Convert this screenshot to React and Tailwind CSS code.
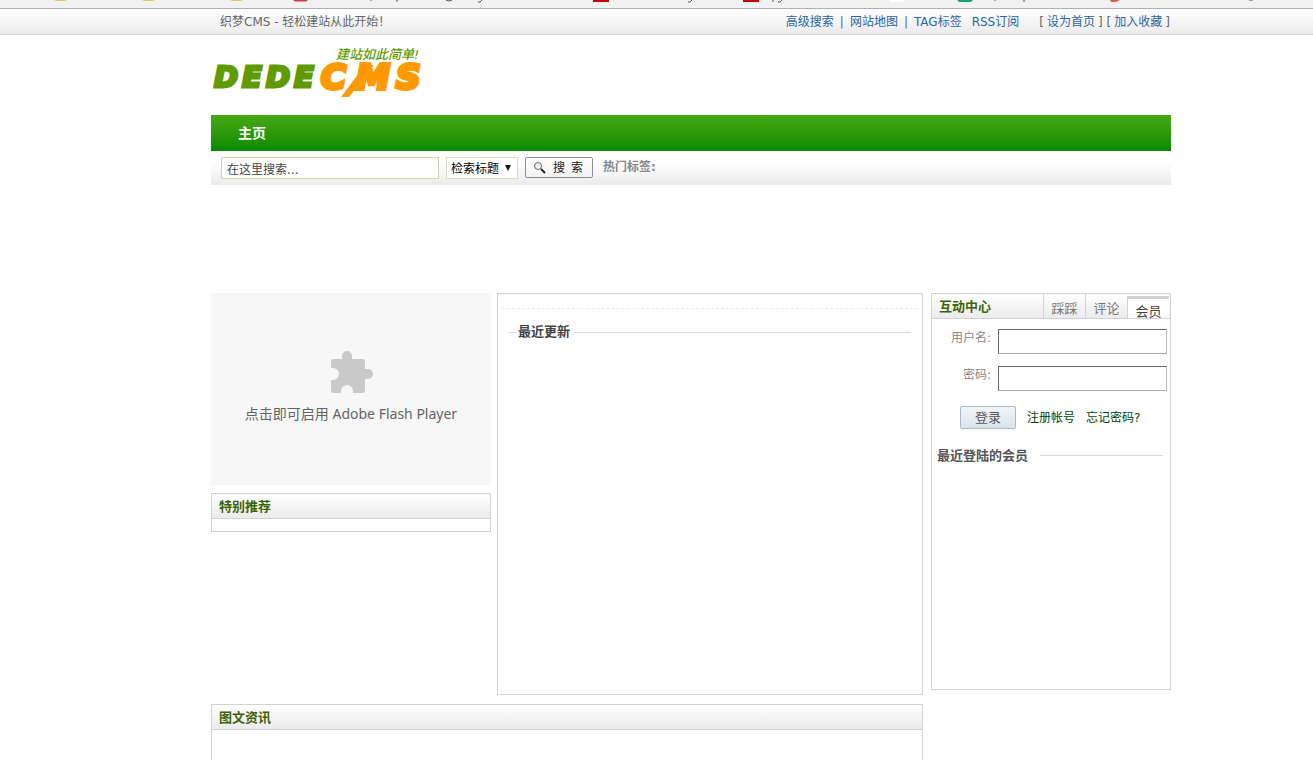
import React, { useState } from 'react';

const fontStack = "font-['DejaVu_Sans','Noto_Sans_CJK_SC',sans-serif]";

const BookmarkStrip = () => (
  <div className="h-[9px] overflow-hidden border-b border-[#b0b0b0] bg-[#f1f1f1]">
    <svg width="1313" height="8" aria-hidden="true">
      <g fill="#d9cf55">
        <path d="M54 0h13l-2 1h-9z" />
        <path d="M142 0h13l-2 1h-9z" />
        <path d="M230 0h13l-2 1h-9z" />
      </g>
      <path d="M293 0h15l-2 1.5h-11z" fill="#d03a48" />
      <g fill="none" stroke="#555" strokeWidth="1">
        <path d="M371 0v1M398 0l-2 1.500M446 0q3 2 6 0M482 0l-2 2h-2" />
        <path d="M692 0l-2 2h-2M773 0v2M782 0l-2 2h-2M995 0v1M1024 0v2M1249 0h4" />
      </g>
      <path d="M593 0h16v2h-16zM743 0h16v2h-16z" fill="#c4000b" />
      <path d="M889 0h16l-2 2h-12z" fill="#fff" />
      <path d="M957 0h16l-2 2h-12z" fill="#12a26a" />
      <path d="M1110 0h10l-4 2h-5z" fill="#d9604c" />
    </svg>
  </div>
);

const TopBar = () => (
  <div className="h-[26px] border-b border-[#d2d2d2] bg-linear-to-b from-white to-[#ebebeb]">
    <div className="ml-[211px] flex h-full max-w-[960px] items-center justify-between pr-px pl-[9px] text-[#666]">
      <span>织梦CMS - 轻松建站从此开始！</span>
      <div className="flex items-center">
        <a href="#search" className="text-[#2b65a5]">高级搜索</a>
        <span className="px-[6px]">|</span>
        <a href="#map" className="text-[#2b65a5]">网站地图</a>
        <span className="px-[6px]">|</span>
        <a href="#tags" className="text-[#2b65a5]">TAG标签</a>
        <a href="#rss" className="ml-[10px] text-[#2b65a5]">RSS订阅</a>
        <span className="ml-5">[</span>
        <a href="#home" className="mx-[3px] text-[#2b65a5]">设为首页</a>
        <span>]</span>
        <span className="ml-1">[</span>
        <a href="#fav" className="mx-[3px] text-[#2b65a5]">加入收藏</a>
        <span>]</span>
      </div>
    </div>
  </div>
);

const Logo = () => (
  <a href="#home" aria-label="DEDECMS">
    <svg width="220" height="64" viewBox="0 0 220 64">
      <text x="125" y="20" fontSize="13" fontStyle="italic" fontWeight="500" fill="#5f9a00">
        建站如此简单!
      </text>
      <g fontWeight="700" fontStyle="italic">
        <text y="48" fontSize="29" fill="#5f9a00" stroke="#5f9a00" strokeWidth="3">
          <tspan x="3">D</tspan>
          <tspan x="31">E</tspan>
          <tspan x="55">D</tspan>
          <tspan x="83">E</tspan>
        </text>
        <text y="50" fontSize="34" fill="#ff9900" stroke="#ff9900" strokeWidth="4">
          <tspan x="110">C</tspan>
          <tspan x="145">M</tspan>
          <tspan x="185">S</tspan>
        </text>
      </g>
      <path d="M130 58l24-32h9l-25 32z" fill="#ff9900" />
    </svg>
  </a>
);

const SearchBar = () => {
  const [keyword, setKeyword] = useState('在这里搜索...');

  return (
    <form
      className="flex h-[34px] items-start bg-linear-to-b from-white from-30% to-[#ebebeb] pt-[6px] pl-[10px]"
      onSubmit={(e) => e.preventDefault()}
    >
      <input
        aria-label="关键词"
        className="h-[22px] w-[218px] border border-[#c5d9a8] bg-white px-[5px] pt-px text-[#444] outline-none"
        value={keyword}
        onChange={(e) => setKeyword(e.target.value)}
      />
      <div className="relative ml-[7px]">
        <select
          aria-label="检索方式"
          className="h-[22px] w-[72px] appearance-none border border-[#cfdfb8] bg-white pt-px pl-1 text-black outline-none"
        >
          <option>检索标题</option>
          <option>智能模糊</option>
        </select>
        <svg className="pointer-events-none absolute top-2 right-[7px]" width="6" height="6" aria-hidden="true">
          <path d="M0 0h6L3 6z" fill="#111" />
        </svg>
      </div>
      <button
        type="submit"
        className="ml-[7px] flex h-[21px] w-[68px] items-center rounded-[2px] border border-[#8e8e8e] bg-linear-to-b from-white to-[#f2f2f2] pl-[7px] text-[#222]"
      >
        <svg width="14" height="14" viewBox="0 0 14 14" className="mr-[6px]" aria-hidden="true">
          <circle cx="5" cy="5" r="3.500" fill="#f4f4f4" stroke="#666" />
          <path d="M8 8l4 4" stroke="#222" strokeWidth="2" />
        </svg>
        <span>搜</span>
        <span className="ml-[6px]">索</span>
      </button>
      <span className="ml-[10px] pt-px font-bold text-[#888]">热门标签:</span>
    </form>
  );
};

const FlashBox = () => (
  <button
    type="button"
    className="flex h-[192px] w-full flex-col items-center bg-[#f7f7f7] pt-[56px] font-['Noto_Sans','Noto_Sans_CJK_SC',sans-serif] text-[14px] text-[#646464]"
  >
    <svg width="44" height="44" viewBox="0 0 44 44" className="mb-3" aria-hidden="true">
      <path
        d="M5 10H13V7A5 5 0 0 1 23 7V10H33Q36 10 36 13V20H39A5 5 0 0 1 39 30H36V41Q36 44 33 44H24V42A6 6 0 0 0 12 42V44H5Q2 44 2 41V31H4A6 6 0 0 0 4 19H2V13Q2 10 5 10Z"
        fill="#c9c9c9"
      />
    </svg>
    点击即可启用 Adobe Flash Player
  </button>
);

const PanelTitle = ({ children }) => (
  <div className="flex h-[25px] items-center border-b border-[#d2d2d2] bg-linear-to-b from-white to-[#ebebeb] pt-[2px] pl-[7px]">
    <h2 className="text-[13px] font-bold text-[#3c6407]">{children}</h2>
  </div>
);

const tabs = ['踩踩', '评论', '会员'];

const MemberPanel = () => {
  const [active, setActive] = useState('会员');

  return (
    <section className="h-[397px] w-[240px] shrink-0 border border-[#d2d2d2]">
      <div className="flex h-[25px] items-center justify-between border-b border-[#d2d2d2] bg-linear-to-b from-white to-[#ebebeb] pr-px pl-[7px]">
        <h2 className="pt-[2px] text-[13px] font-bold text-[#3c6407]">互动中心</h2>
        <div className="flex h-full">
          {tabs.map((tab) => (
            <button
              key={tab}
              type="button"
              onClick={() => setActive(tab)}
              className={
                tab === active
                  ? 'mt-[2px] w-[42px] border-t-[3px] border-l border-[#d2d2d2] bg-white pt-1 text-[13px] text-[#444]'
                  : 'w-[42px] border-l border-[#d2d2d2] pt-[6px] text-[13px] text-[#777]'
              }
            >
              {tab}
            </button>
          ))}
        </div>
      </div>
      <form className="pt-[10px] pr-[3px]" onSubmit={(e) => e.preventDefault()}>
        <div className="mb-3 flex justify-end">
          <label htmlFor="userid" className="mr-[7px] text-[#888]">用户名:</label>
          <input id="userid" className="h-[25px] w-[169px] border border-t-[#666] border-r-[#bbb] border-b-[#aaa] border-l-[#666] px-1 outline-none" />
        </div>
        <div className="flex justify-end">
          <label htmlFor="pwd" className="mr-[7px] text-[#888]">密码:</label>
          <input id="pwd" type="password" className="h-[25px] w-[169px] border border-t-[#666] border-r-[#bbb] border-b-[#aaa] border-l-[#666] px-1 outline-none" />
        </div>
        <div className="mt-[15px] flex items-center pl-7 text-[#004400]">
          <button
            type="submit"
            className="h-[23px] w-[56px] rounded-[2px] border border-[#aab8c5] bg-linear-to-b from-[#f1f5f8] to-[#dce3ea] text-[13px] text-[#555]"
          >
            登录
          </button>
          <a href="#register" className="ml-[11px]">注册帐号</a>
          <a href="#forgot" className="ml-[11px]">忘记密码?</a>
        </div>
      </form>
      <div className="mt-4 flex items-center pr-[7px] pl-[5px]">
        <h3 className="pt-[2px] text-[13px] font-bold text-[#555]">最近登陆的会员</h3>
        <div className="ml-3 h-px flex-1 bg-[#dcdcdc]" />
      </div>
    </section>
  );
};

const App = () => {
  return (
    <div className={`flex min-h-screen flex-col bg-white text-[12px] leading-[18px] ${fontStack}`}>
      <BookmarkStrip />
      <TopBar />
      <div className="ml-[211px] flex max-w-[960px] grow flex-col">
        <header className="h-20 pt-1">
          <Logo />
        </header>
        <nav className="flex h-9 items-center bg-linear-to-b from-[#46a914] to-[#008a00] pl-[27px]">
          <a href="#home" className="text-[14px] font-bold text-white">主页</a>
        </nav>
        <SearchBar />
        <main className="mt-[108px] flex grow gap-2">
          <div className="flex min-w-0 flex-1 flex-col">
            <div className="flex gap-[6px]">
              <div className="w-[280px] shrink-0">
                <FlashBox />
                <section className="mt-2 h-[39px] border border-[#d2d2d2]">
                  <PanelTitle>特别推荐</PanelTitle>
                </section>
              </div>
              <section className="h-[402px] min-w-0 flex-1 border border-[#d2d2d2]">
                <div className="mx-1 mt-[14px] border-b border-dashed border-[#ebebeb]" />
                <div className="mt-[14px] mr-[11px] ml-[10px] flex items-center">
                  <div className="h-px w-2 bg-[#dcdcdc]" />
                  <h2 className="mx-[2px] text-[13px] font-bold text-[#444]">最近更新</h2>
                  <div className="ml-[2px] h-px flex-1 bg-[#dcdcdc]" />
                </div>
              </section>
            </div>
            <section className="mt-[9px] grow border border-b-0 border-[#d2d2d2]">
              <PanelTitle>图文资讯</PanelTitle>
            </section>
          </div>
          <MemberPanel />
        </main>
      </div>
    </div>
  );
};

export default App;
